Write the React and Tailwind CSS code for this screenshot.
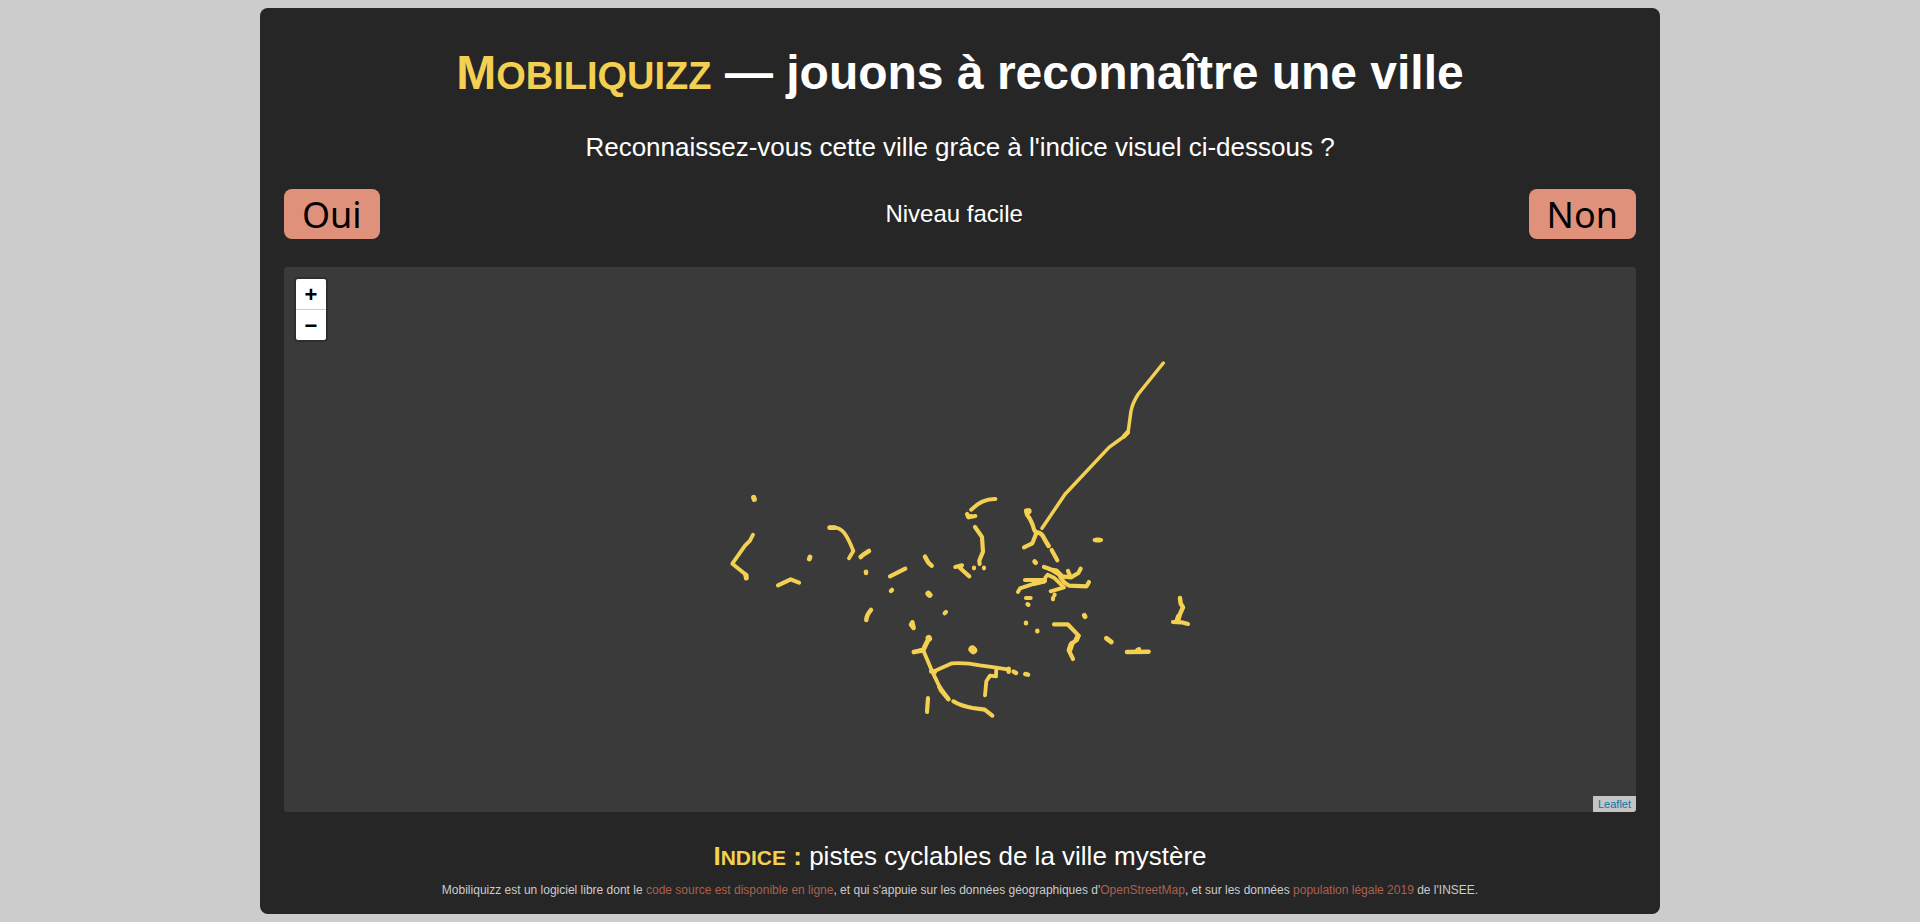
const west = [
  { d: "M101 82L103 88", w: 14 },
  { d: "M99 194L90 212L75 227L37 281L80 316L78 325" },
  { d: "M77 315L79 324", w: 13 },
  { d: "M268 267L270 261", w: 13 },
  { d: "M174 346L212 328L237 338", w: 11 },
  { d: "M329 173Q356 168 372 188Q386 206 400 243L387 265" },
  { d: "M329 173L344 173", w: 13 },
  { d: "M422 261L430 254L447 243", w: 12 },
  { d: "M438 305L438 309", w: 12 },
  { d: "M510 319L556 296", w: 11 },
  { d: "M513 363L516 360", w: 12 },
  { d: "M453 420Q439 436 439 450", w: 12 },
  { d: "M615 260L625 278L635 287", w: 12 },
  { d: "M625 371L629 375", w: 16 },
  { d: "M674 430L678 426", w: 11 },
  { d: "M577 457L573 464L581 474L577 457", w: 12 },
];

const centre = [
  { d: "M214 119Q246 86 286 87", w: 11 },
  { d: "M201 132L206 142L226 138M203 139L214 138", w: 11 },
  { d: "M225 171L246 201L249 245L238 272L239 282", w: 11 },
  { d: "M222 293L222 295M252 293L252 295", w: 11 },
  { d: "M166 291L186 286L180 294L208 319", w: 11 },
  { d: "M388 121L378 122L381 134Q396 153 402 178L409 190L397 220L372 232", w: 11 },
  { d: "M382 124L386 124", w: 16 },
  { d: "M409 188Q424 186 434 208L446 228", w: 12 },
  { d: "M455 240L472 271", w: 11 },
  { d: "M404 275L407 278", w: 13 },
  { d: "M432 291L450 297L486 319L514 322L535 309L542 296M448 298L470 302L486 318", w: 11 },
  { d: "M504 303L511 319", w: 11 },
  { d: "M375 330L412 330L435 330", w: 11 },
  { d: "M354 366L360 355L405 340L433 335L436 323L443 314L462 323L492 352L452 364", w: 10 },
  { d: "M405 340L433 332", w: 14 },
  { d: "M480 320L494 338L507 347L560 349L567 336", w: 11 },
  { d: "M378 384L392 384", w: 11 },
  { d: "M383 403L385 404", w: 12 },
  { d: "M464 374L463 376M459 384L459 388", w: 11 },
];

const east = [
  { d: "M284 150L303 150", w: 11 },
  { d: "M290 150L297 150", w: 14 },
  { d: "M253 376L255 380", w: 13 },
  { d: "M78 398L78 400M112 422L112 424", w: 12 },
  { d: "M162 403L203 403L236 437L230 450L212 463L206 480L219 507", w: 11 },
  { d: "M234 438L229 449M216 460L210 478", w: 14 },
  { d: "M319 445L334 456", w: 13 },
  { d: "M381 486L446 485", w: 12 },
  { d: "M412 480L417 478", w: 12 },
  { d: "M540 324L542 340L549 352L537 379L533 393", w: 12 },
  { d: "M536 380L532 392", w: 15 },
  { d: "M519 396L545 397L564 402", w: 11 },
];

const northEast = [
  { d: "M460 69L385 162Q368 188 363 213L354 279L344 288L297 322L165 463L96 565", w: 9 },
  { d: "M353 277L342 289", w: 12 },
];

const south = [
  { d: "M87 84L69 121", w: 13 },
  { d: "M86 84L87 86", w: 17 },
  { d: "M42 126L69 119L97 185L118 229L146 268", w: 10 },
  { d: "M42 126L66 121M94 184L104 185", w: 13 },
  { d: "M118 230L124 242L145 267", w: 12 },
  { d: "M97 186L156 160Q200 158 240 166L289 173L326 179", w: 10 },
  { d: "M326 176L326 185", w: 12 },
  { d: "M341 185L348 189M376 192L384 194", w: 12 },
  { d: "M289 174L288 199L270 197L259 214L255 256", w: 10 },
  { d: "M160 274Q182 288 218 294L254 299L277 317", w: 11 },
  { d: "M84 264L81 306", w: 11 },
  { d: "M217 118L220 121", w: 22 },
];

function Tracks({ at, lines }) {
  return (
    <g transform={`translate(${at}) scale(0.3333)`}>
      {lines.map((line) => (
        <path key={line.d} d={line.d} strokeWidth={(line.w ?? 10) + 1.5} />
      ))}
    </g>
  );
}

function AnswerButton({ children }) {
  return (
    <button
      type="button"
      className="h-[50px] rounded-lg bg-[#df917b] px-[18px] pt-0.5 font-['Noto_Sans',sans-serif] text-4xl leading-[48px] text-black"
    >
      {children}
    </button>
  );
}

function ZoomControl() {
  const key = "block w-[30px] bg-white text-center text-[22px] font-bold leading-[32px] text-black";
  return (
    <div className="absolute left-2.5 top-2.5 rounded border-2 border-black/20 bg-clip-padding">
      <button type="button" aria-label="Zoomer" className={`${key} h-[31px] rounded-t-xs border-b border-[#ccc]`}>
        +
      </button>
      <button type="button" aria-label="Dézoomer" className={`${key} h-[30px] rounded-b-xs`}>
        −
      </button>
    </div>
  );
}

function CityMap() {
  return (
    <div className="relative mt-7 min-h-80 flex-1 overflow-hidden rounded-[3px] bg-[#3a3a3a]">
      <svg
        className="absolute inset-0 size-full"
        viewBox="284 267 1352 545"
        fill="none"
        stroke="#f3d052"
        strokeLinecap="round"
        strokeLinejoin="round"
        role="img"
        aria-label="Pistes cyclables"
      >
        <Tracks at="720 470" lines={west} />
        <Tracks at="900 470" lines={centre} />
        <Tracks at="1000 490" lines={east} />
        <Tracks at="1010 340" lines={northEast} />
        <Tracks at="900 610" lines={south} />
      </svg>
      <ZoomControl />
      <div className="absolute bottom-0 right-0 bg-white/70 px-[5px] text-[11px] leading-4">
        <a href="https://leafletjs.com" className="text-[#0078a8]">
          Leaflet
        </a>
      </div>
    </div>
  );
}

export default function App() {
  return (
    <div className="min-h-screen bg-[#ccc] p-2 font-['Liberation_Sans',Arial,sans-serif]">
      <main className="mx-auto flex min-h-[calc(100vh-16px)] max-w-[1400px] flex-col rounded-lg bg-[#262626] px-6 pb-4 pt-9 text-white">
        <h1 className="text-center text-5xl font-bold leading-[58px]">
          <span className="text-[#f3d052]">
            M<span className="text-[38px] uppercase leading-none">obiliquizz</span>
          </span>{" "}
          — jouons à reconnaître une ville
        </h1>
        <p className="mt-[30px] text-center text-[26px] leading-[30px]">
          Reconnaissez-vous cette ville grâce à l'indice visuel ci-dessous ?
        </p>
        <div className="mt-[27px] flex items-center justify-between">
          <AnswerButton>Oui</AnswerButton>
          <span className="text-2xl">Niveau facile</span>
          <AnswerButton>Non</AnswerButton>
        </div>
        <CityMap />
        <p className="mt-7 text-center text-[26px] leading-[32px]">
          <strong className="text-[#f3d052]">
            I<span className="text-[21px] uppercase leading-none">ndice</span> :
          </strong>{" "}
          pistes cyclables de la ville mystère
        </p>
        <footer className="mt-2.5 text-center text-xs leading-4 text-[#ccc]">
          Mobiliquizz est un logiciel libre dont le{" "}
          <a href="#source" className="text-[#ac604f]">
            code source est disponible en ligne
          </a>
          , et qui s'appuie sur les données géographiques d'
          <a href="https://www.openstreetmap.org" className="text-[#ac604f]">
            OpenStreetMap
          </a>
          , et sur les données{" "}
          <a href="#population" className="text-[#ac604f]">
            population légale 2019
          </a>{" "}
          de l'INSEE.
        </footer>
      </main>
    </div>
  );
}
